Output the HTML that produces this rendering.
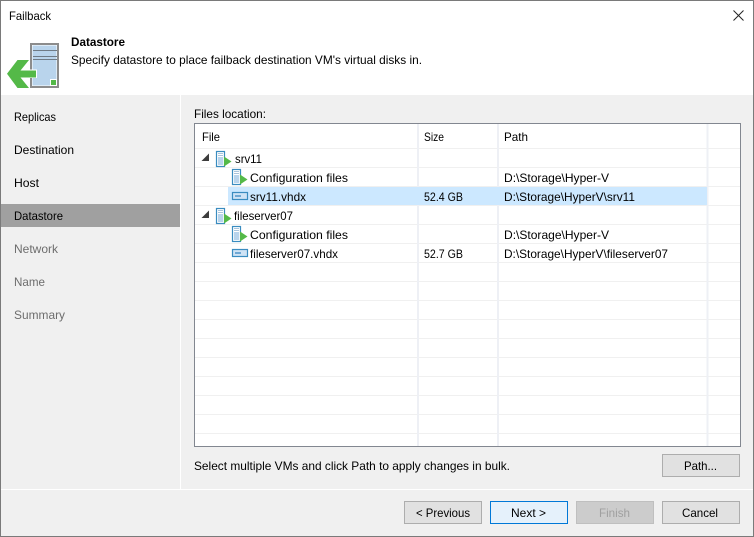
<!DOCTYPE html>
<html>
<head>
<meta charset="utf-8">
<style>
html,body{margin:0;padding:0;background:#f0f0f0;width:754px;height:537px;overflow:hidden}
svg{display:block}
text{font-family:"Liberation Sans",sans-serif;font-size:12px;fill:#000}
.g{fill:#6d6d6d}
.d{fill:#a0a0a0}
.l{stroke:#f0f0f0;stroke-width:1;fill:none}
.c{stroke:#eef0f5;stroke-width:2;fill:none}
</style>
</head>
<body>
<svg width="754" height="537" viewBox="0 0 754 537" xmlns="http://www.w3.org/2000/svg">
<defs>
<g id="srv">
<rect x="0.5" y="0.5" width="8" height="15" fill="#fff" stroke="#3a8cc0" stroke-width="1.2"/>
<rect x="2" y="2" width="5" height="1" fill="#aac4dc"/>
<rect x="2" y="4" width="5" height="1" fill="#aac4dc"/>
<rect x="2" y="6" width="5" height="8" fill="#b9d4ec"/>
<path d="M8 5.500L15.500 10.500L8 15.500Z" fill="#54b948"/>
</g>
<g id="vhd">
<rect x="0.5" y="0.5" width="15" height="7" fill="#cfe3f5" stroke="#3a8cc0" stroke-width="1.2"/>
<rect x="3" y="3" width="6" height="2" fill="#6fa8d4"/>
</g>
<path id="arr" d="M0.500 8L8 0.500V8H0.500Z" fill="#3c3c3c"/>
</defs>

<rect width="754" height="537" fill="#f0f0f0"/>
<rect x="1" y="1" width="752" height="94" fill="#fff"/>
<rect x="0.5" y="0.5" width="753" height="536" fill="none" stroke="#7a7a7a"/>

<text x="9" y="20" textLength="42" lengthAdjust="spacingAndGlyphs">Failback</text>
<path d="M733.500 10.500L743.500 20.500M743.500 10.500L733.500 20.500" stroke="#222" stroke-width="1" fill="none"/>

<!-- header icon -->
<rect x="31" y="44" width="27" height="43" fill="#fff" stroke="#8c8c8c" stroke-width="2"/>
<rect x="32.500" y="45.500" width="24" height="40" fill="#b9d4ec"/>
<rect x="33" y="50" width="24" height="1" fill="#6f7b86"/>
<rect x="33" y="56" width="24" height="1" fill="#6f7b86"/>
<rect x="33" y="59" width="24" height="1" fill="#6f7b86"/>
<rect x="50.500" y="79.500" width="6" height="6" fill="#54b948" stroke="#fff" stroke-width="1"/>
<rect x="18" y="69.500" width="19" height="8.500" fill="#fff"/>
<path d="M7 73.700L17.500 60H29L20.500 70.500H36V77.500H20.500L29 88H17.500Z" fill="#54b948"/>

<text x="71" y="46" textLength="54" lengthAdjust="spacingAndGlyphs" style="font-weight:bold">Datastore</text>
<text x="71" y="64" textLength="351" lengthAdjust="spacingAndGlyphs">Specify datastore to place failback destination VM's virtual disks in.</text>

<!-- nav -->
<rect x="180" y="95" width="1" height="394" fill="#fff"/>
<rect x="1" y="204" width="179" height="23" fill="#a0a0a0"/>
<text x="14" y="121" textLength="42" lengthAdjust="spacingAndGlyphs">Replicas</text>
<text x="14" y="154" textLength="60" lengthAdjust="spacingAndGlyphs">Destination</text>
<text x="14" y="187" textLength="25" lengthAdjust="spacingAndGlyphs">Host</text>
<text x="14" y="220" textLength="49" lengthAdjust="spacingAndGlyphs">Datastore</text>
<text class="g" x="14" y="253" textLength="44" lengthAdjust="spacingAndGlyphs">Network</text>
<text class="g" x="14" y="286" textLength="31" lengthAdjust="spacingAndGlyphs">Name</text>
<text class="g" x="14" y="319" textLength="51" lengthAdjust="spacingAndGlyphs">Summary</text>

<text x="194" y="118" textLength="72" lengthAdjust="spacingAndGlyphs">Files location:</text>

<!-- table -->
<rect x="194.500" y="123.500" width="546" height="323" fill="#fff" stroke="#828790"/>
<g class="l">
<path d="M195 148.500H740M195 167.500H740M195 186.500H740M195 205.500H740M195 224.500H740M195 243.500H740M195 262.500H740M195 281.500H740M195 300.500H740M195 319.500H740M195 338.500H740M195 357.500H740M195 376.500H740M195 395.500H740M195 414.500H740M195 433.500H740"/>
</g>
<g class="c">
<path d="M418 124V446M498 124V446M707.500 124V446"/>
</g>
<rect x="228" y="187" width="479" height="18" fill="#cce8ff"/>

<text x="202" y="141" textLength="18" lengthAdjust="spacingAndGlyphs">File</text>
<text x="424" y="141" textLength="20" lengthAdjust="spacingAndGlyphs">Size</text>
<text x="504" y="141" textLength="24" lengthAdjust="spacingAndGlyphs">Path</text>

<use href="#arr" x="201" y="153"/>
<use href="#srv" x="216" y="151"/>
<text x="235" y="163" textLength="27" lengthAdjust="spacingAndGlyphs">srv11</text>

<use href="#srv" x="232" y="169"/>
<text x="250" y="182" textLength="98" lengthAdjust="spacingAndGlyphs">Configuration files</text>
<text x="504" y="182" textLength="105" lengthAdjust="spacingAndGlyphs">D:\Storage\Hyper-V</text>

<use href="#vhd" x="232" y="192"/>
<text x="250" y="201" textLength="56" lengthAdjust="spacingAndGlyphs">srv11.vhdx</text>
<text x="424" y="201" textLength="39" lengthAdjust="spacingAndGlyphs">52.4 GB</text>
<text x="504" y="201" textLength="131" lengthAdjust="spacingAndGlyphs">D:\Storage\HyperV\srv11</text>

<use href="#arr" x="201" y="210"/>
<use href="#srv" x="216" y="208"/>
<text x="234" y="220" textLength="59" lengthAdjust="spacingAndGlyphs">fileserver07</text>

<use href="#srv" x="232" y="226"/>
<text x="250" y="239" textLength="98" lengthAdjust="spacingAndGlyphs">Configuration files</text>
<text x="504" y="239" textLength="105" lengthAdjust="spacingAndGlyphs">D:\Storage\Hyper-V</text>

<use href="#vhd" x="232" y="249"/>
<text x="250" y="258" textLength="88" lengthAdjust="spacingAndGlyphs">fileserver07.vhdx</text>
<text x="424" y="258" textLength="39" lengthAdjust="spacingAndGlyphs">52.7 GB</text>
<text x="504" y="258" textLength="164" lengthAdjust="spacingAndGlyphs">D:\Storage\HyperV\fileserver07</text>

<text x="194" y="470" textLength="316" lengthAdjust="spacingAndGlyphs">Select multiple VMs and click Path to apply changes in bulk.</text>

<!-- buttons -->
<rect x="662.500" y="454.500" width="77" height="22" fill="#e1e1e1" stroke="#adadad"/>
<text x="684" y="470" textLength="33" lengthAdjust="spacingAndGlyphs">Path...</text>

<rect x="1" y="489" width="752" height="1" fill="#fff"/>

<rect x="404.500" y="501.500" width="77" height="22" fill="#e1e1e1" stroke="#adadad"/>
<text x="416" y="517" textLength="54" lengthAdjust="spacingAndGlyphs">&lt; Previous</text>
<rect x="490.500" y="501.500" width="77" height="22" fill="#e5f1fb" stroke="#0078d7"/>
<text x="511" y="517" textLength="35" lengthAdjust="spacingAndGlyphs">Next &gt;</text>
<rect x="576.500" y="501.500" width="77" height="22" fill="#cccccc" stroke="#bfbfbf"/>
<text class="d" x="599" y="517" textLength="31" lengthAdjust="spacingAndGlyphs">Finish</text>
<rect x="662.500" y="501.500" width="77" height="22" fill="#e1e1e1" stroke="#adadad"/>
<text x="682" y="517" textLength="36" lengthAdjust="spacingAndGlyphs">Cancel</text>
</svg>
</body>
</html>
